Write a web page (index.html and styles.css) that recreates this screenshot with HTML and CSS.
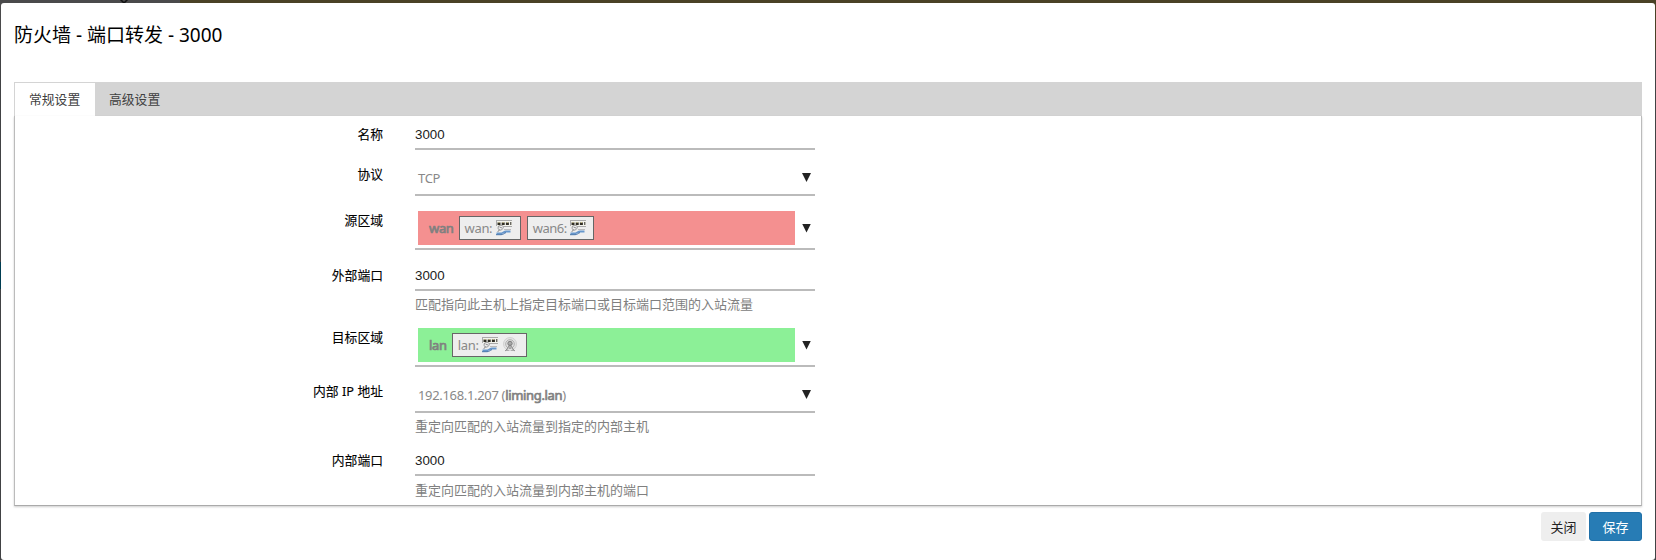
FILE: index.html
```html
<!DOCTYPE html>
<html lang="zh-CN">
<head>
<meta charset="utf-8">
<title>防火墙 - 端口转发 - 3000</title>
<link rel="stylesheet" href="styles.css">
</head>
<body>
<svg class="symbols" aria-hidden="true">
  <symbol id="ethernet" viewBox="0 0 16 16">
    <path fill="#f3f3ec" d="M0 1h16v5H0z"/>
    <path fill="#aaa" d="M0 0h16v1H0zM8 6h8v1H8zM8 9h7v.7H8zM0 1h1v5H0z"/>
    <path fill="#302e25" d="M1.500 2.500h3v2.500h-3zM5.700 2.500h3v2.500h-3zM9.900 2.500h3v2.500h-3zM14.300 2h1v3h-1z"/>
    <path fill="#c8ba78" d="M2.500 2h1v1h-1zM6.700 2h1v1h-1zM10.900 2h1v1h-1z"/>
    <path fill="#eee" stroke="#888" stroke-width=".8" d="M2.500 6l2.500-.8 2.500 1.200-.5 1.800-1.500 1.800-2.200.2-1.300-2z"/>
    <path fill="none" stroke="#777" stroke-width=".8" d="M3.500 9.500l-1.800 2.500M3.500 7l2.500 1"/>
    <path fill="none" stroke="#6797cc" stroke-width="1.800" d="M.5 13.500h4c2 0 3.500-2 5.500-2h4.500"/>
    <path fill="none" stroke="#4674aa" stroke-width="1" d="M0 14.700h5c2 0 3-1.200 5-2.200"/>
  </symbol>
  <symbol id="wifi" viewBox="0 0 16 16">
    <circle cx="8" cy="7" r="6.500" fill="#e3e3e3" stroke="#ccc" stroke-width=".8"/>
    <circle cx="8" cy="7" r="4.300" fill="none" stroke="#aaa" stroke-width=".9"/>
    <circle cx="8" cy="6.500" r="2.200" fill="#aaa" stroke="#777" stroke-width=".9"/>
    <path fill="none" stroke="#888" stroke-width="1" d="M7 9l-3 4.500M9 9l3 4.500M8 7v5M3 14c1-1 2-1 3.500-.500M9.500 13.500c1.500-.500 2.500-.500 3.500.500"/>
  </symbol>
</svg>
<div class="backdrop">
  <svg class="chevron" viewBox="0 0 16 4"><path d="M1-4l7 7 7-7"/></svg>
  <span class="rail"></span>
</div>
<main class="modal">
  <h4 class="title">防火墙 - 端口转发 - 3000</h4>
  <ul class="tabs">
    <li class="tab active">常规设置</li>
    <li class="tab">高级设置</li>
  </ul>
  <section class="panel">
    <div class="row text-row">
      <label class="label">名称</label>
      <div class="field"><div class="input">3000</div></div>
    </div>
    <div class="row">
      <label class="label">协议</label>
      <div class="field"><div class="dropdown"><span class="value">TCP</span><span class="arrow"></span></div></div>
    </div>
    <div class="row">
      <label class="label">源区域</label>
      <div class="field"><div class="dropdown tall">
        <div class="zone wan"><strong>wan</strong>
          <span class="iface">wan:<svg class="icon"><use href="#ethernet"/></svg></span>
          <span class="iface next">wan6:<svg class="icon"><use href="#ethernet"/></svg></span>
        </div><span class="arrow"></span></div></div>
    </div>
    <div class="row text-row later">
      <label class="label">外部端口</label>
      <div class="field"><div class="input">3000</div><div class="hint">匹配指向此主机上指定目标端口或目标端口范围的入站流量</div></div>
    </div>
    <div class="row">
      <label class="label">目标区域</label>
      <div class="field"><div class="dropdown tall">
        <div class="zone lan"><strong>lan</strong>
          <span class="iface">lan:<svg class="icon"><use href="#ethernet"/></svg><svg class="icon"><use href="#wifi"/></svg></span>
        </div><span class="arrow"></span></div></div>
    </div>
    <div class="row">
      <label class="label">内部 IP 地址</label>
      <div class="field"><div class="dropdown"><span class="value">192.168.1.207 (<b>liming.lan</b>)</span><span class="arrow"></span></div><div class="hint">重定向匹配的入站流量到指定的内部主机</div></div>
    </div>
    <div class="row text-row later">
      <label class="label">内部端口</label>
      <div class="field"><div class="input">3000</div><div class="hint last">重定向匹配的入站流量到内部主机的端口</div></div>
    </div>
  </section>
  <footer class="actions">
    <button class="button">关闭</button>
    <button class="button save">保存</button>
  </footer>
</main>
</body>
</html>
```
FILE: styles.css
```css
* { box-sizing: border-box; }
body {
  margin: 0;
  height: 560px;
  padding: 3px 1px 0;
  overflow: hidden;
  background: linear-gradient(90deg, #4a4a4b 180px, #4a4126 180px) top / 100% 50px no-repeat, #414244;
  font: 13px "Noto Sans", "Noto Sans CJK SC", sans-serif;
  color: #000;
}
.symbols { position: absolute; width: 0; height: 0; }
.chevron { position: absolute; left: 116px; top: 0; width: 16px; height: 4px; fill: none; stroke: #111; stroke-width: 1.5; }
.rail { position: absolute; left: 0; top: 262px; width: 1px; height: 27px; background: #003d51; }
.modal {
  position: relative;
  display: flex;
  flex-direction: column;
  height: 557px;
  padding: 0 13px;
  background: #fff;
  border-radius: 3px;
}
.title { margin: 0; height: 79px; padding-top: 17px; font-size: 19px; font-weight: 400; line-height: 30px; }
.tabs {
  display: flex;
  flex: none;
  height: 34px;
  margin: 0;
  padding: 1px 0 0 1px;
  list-style: none;
  background: #d4d4d4;
}
.tab { padding: 0 14px; line-height: 33px; font-size: 12.8px; color: #404040; }
.tab.active { width: 80px; padding: 0 0 0 14px; background: #fff; }
.panel {
  display: flex;
  flex-direction: column;
  gap: 8px;
  height: 390px;
  padding-top: 4px;
  border: 1px solid #bbb;
  border-bottom-color: #aaa;
  border-top-width: 0;
  box-shadow: 0 1px 2px rgba(0, 0, 0, .2);
}
.row { display: flex; gap: 32px; }
.later { padding-top: 3px; }
.label { width: 368px; text-align: right; line-height: 32px; font-size: 12.8px; -webkit-text-stroke: .1px #000; }
.text-row .label { line-height: 28px; }
.field { width: 400px; }
.input {
  height: 30px;
  border-bottom: 2px solid #bbb;
  line-height: 30px;
  font-family: "Liberation Sans", sans-serif;
  font-size: 13.3px;
  color: #222;
}
.dropdown {
  display: flex;
  align-items: center;
  justify-content: space-between;
  height: 38px;
  padding: 3px 4px 0 3px;
  border-bottom: 2px solid #bbb;
  color: #888;
  letter-spacing: -.33px;
}
.tall { height: 46px; padding-top: 4px; }
.dropdown b, .zone strong { font-weight: 400; -webkit-text-stroke: .7px #808080; }
.arrow { width: 9px; height: 9px; background: #222; clip-path: polygon(0 0, 100% 0, 50% 100%); }
.hint { height: 22px; padding-top: 4px; line-height: 18px; color: #808080; }
.hint.last { line-height: 20px; }
.zone { display: flex; align-items: center; width: 377px; height: 34px; padding-left: 11px; color: #888; }
.zone strong { color: #808080; margin-right: 5px; }
.iface, .zone strong { line-height: 16px; padding-bottom: 1px; }
.wan { background: #f49090; }
.lan { background: #8cf097; }
.iface {
  display: flex;
  align-items: center;
  gap: 3.5px;
  height: 24px;
  padding: 0 8px 0 5px;
  border: 1px solid #666;
  background: #eee;
}
.next { margin-left: 6px; padding-right: 7px; letter-spacing: -.5px; }
.icon { width: 16px; height: 16px; }
.actions { display: flex; justify-content: flex-end; gap: 3px; padding-top: 6px; }
.button {
  width: 45px;
  height: 29px;
  padding: 0;
  border: 0;
  border-radius: 3px;
  background: #eee;
  font: inherit;
  color: #222;
}
.save { width: 53px; border: 1px solid #2070a8; background: #277cb5; color: #fff; }
```
